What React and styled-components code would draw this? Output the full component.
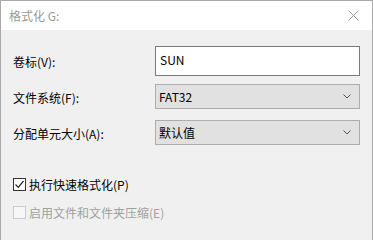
import React from 'react';
import styled, { createGlobalStyle } from 'styled-components';

const GlobalStyle = createGlobalStyle`
  html, body {
    margin: 0;
    padding: 0;
    background: #f0f0f0;
  }
  body {
    font-family: 'Noto Sans CJK SC', 'Noto Sans', 'Liberation Sans', sans-serif;
    font-size: 12px;
    color: #000;
  }
`;

const Window = styled.div`
  width: 373px;
  height: 240px;
  box-sizing: border-box;
  border: 1px solid #a9a9a9;
  border-bottom: none;
  background: #f0f0f0;
  display: flex;
  flex-direction: column;
  overflow: hidden;
`;

const TitleBar = styled.div`
  height: 29px;
  flex: none;
  background: #fff;
  display: flex;
  align-items: center;
  justify-content: space-between;
  padding: 0 9px 0 8px;
  color: #999;
  line-height: 1;
`;

const CloseButton = styled.div`
  width: 12px;
  height: 12px;
  display: flex;
  align-items: center;
  justify-content: center;
  margin-right: 4px;
`;

const Body = styled.div`
  padding: 16px 0 0 12px;
  display: flex;
  flex-direction: column;
`;

const Row = styled.div`
  display: grid;
  grid-template-columns: 142px 205px;
  align-items: center;
  margin-top: ${(p) => p.$top || 0}px;
`;

const Label = styled.span`
  line-height: 1;
  padding-top: ${(p) => p.$nudge || 0}px;
`;

const TextBox = styled.div`
  height: 30px;
  box-sizing: border-box;
  border: 1px solid #7a7a7a;
  background: #fff;
  display: flex;
  align-items: center;
  padding-left: 4px;
  padding-bottom: 4px;
`;

const Select = styled.div`
  height: 25px;
  box-sizing: border-box;
  border: 1px solid #adadad;
  background: #e1e1e1;
  display: flex;
  align-items: center;
  justify-content: space-between;
  padding: 0 8px 0 3px;
`;

const CheckRow = styled.div`
  display: flex;
  align-items: center;
  height: 15px;
  margin-top: ${(p) => p.$top || 0}px;
  color: ${(p) => (p.$disabled ? '#a0a0a0' : '#000')};
`;

const Box = styled.div`
  width: 13px;
  height: 13px;
  box-sizing: border-box;
  border: 1px solid ${(p) => (p.$disabled ? '#cccccc' : '#333')};
  background: ${(p) => (p.$disabled ? '#f7f7f7' : '#fff')};
  margin-right: 3px;
  display: flex;
  align-items: center;
  justify-content: center;
`;

const Chevron = () => (
  <svg width="8" height="5" viewBox="0 0 8 5">
    <path d="M0.5 0.5 L4 4 L7.5 0.5" fill="none" stroke="#555" strokeWidth="1" />
  </svg>
);

const CloseIcon = () => (
  <svg width="11" height="11" viewBox="0 0 11 11">
    <path d="M0.5 0.5 L10.5 10.5 M10.5 0.5 L0.5 10.5" stroke="#999" strokeWidth="1" />
  </svg>
);

const Tick = () => (
  <svg width="11" height="11" viewBox="0 0 11 11">
    <path d="M1.5 5.5 L4.3 8.3 L9.5 2" fill="none" stroke="#222" strokeWidth="1.2" />
  </svg>
);

export default function App() {
  return (
    <>
      <GlobalStyle />
      <Window>
        <TitleBar>
          <span>格式化 G:</span>
          <CloseButton>
            <CloseIcon />
          </CloseButton>
        </TitleBar>
        <Body>
          <Row>
            <Label $nudge={2}>卷标(V):</Label>
            <TextBox>SUN</TextBox>
          </Row>
          <Row $top={8}>
            <Label $nudge={3}>文件系统(F):</Label>
            <Select>
              <span>FAT32</span>
              <Chevron />
            </Select>
          </Row>
          <Row $top={11}>
            <Label $nudge={2}>分配单元大小(A):</Label>
            <Select>
              <span>默认值</span>
              <Chevron />
            </Select>
          </Row>
          <CheckRow $top={32}>
            <Box>
              <Tick />
            </Box>
            <span>执行快速格式化(P)</span>
          </CheckRow>
          <CheckRow $top={13} $disabled>
            <Box $disabled />
            <span>启用文件和文件夹压缩(E)</span>
          </CheckRow>
        </Body>
      </Window>
    </>
  );
}
